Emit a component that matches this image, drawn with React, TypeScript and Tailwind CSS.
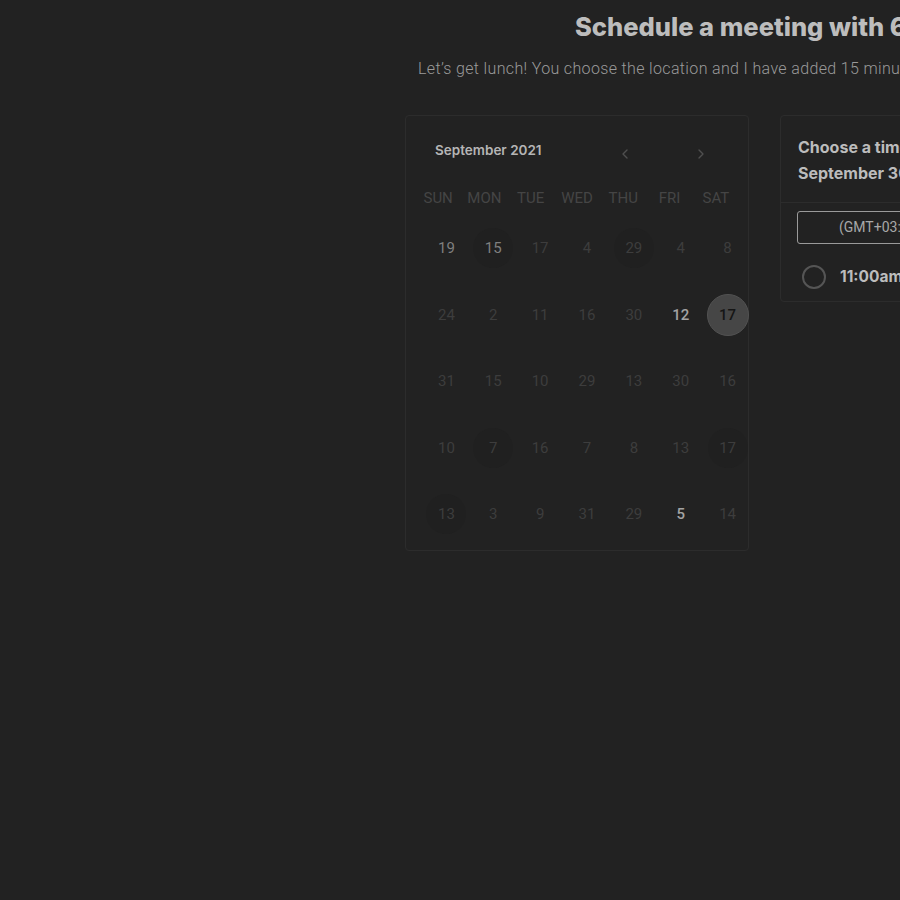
import { ChevronLeft, ChevronRight } from 'lucide-react'

type Day = { n: number; tone: 'dim' | 'mid' | 'bright' | 'selected'; ring?: boolean }

const weekdays = ['SUN', 'MON', 'TUE', 'WED', 'THU', 'FRI', 'SAT']

const rows: Day[][] = [
    [
        { n: 19, tone: 'mid' },
        { n: 15, tone: 'mid', ring: true },
        { n: 17, tone: 'dim' },
        { n: 4, tone: 'dim' },
        { n: 29, tone: 'dim', ring: true },
        { n: 4, tone: 'dim' },
        { n: 8, tone: 'dim' },
    ],
    [
        { n: 24, tone: 'dim' },
        { n: 2, tone: 'dim' },
        { n: 11, tone: 'dim' },
        { n: 16, tone: 'dim' },
        { n: 30, tone: 'dim' },
        { n: 12, tone: 'bright' },
        { n: 17, tone: 'selected' },
    ],
    [
        { n: 31, tone: 'dim' },
        { n: 15, tone: 'dim' },
        { n: 10, tone: 'dim' },
        { n: 29, tone: 'dim' },
        { n: 13, tone: 'dim' },
        { n: 30, tone: 'dim' },
        { n: 16, tone: 'dim' },
    ],
    [
        { n: 10, tone: 'dim' },
        { n: 7, tone: 'dim', ring: true },
        { n: 16, tone: 'dim' },
        { n: 7, tone: 'dim' },
        { n: 8, tone: 'dim' },
        { n: 13, tone: 'dim' },
        { n: 17, tone: 'dim', ring: true },
    ],
    [
        { n: 13, tone: 'dim', ring: true },
        { n: 3, tone: 'dim' },
        { n: 9, tone: 'dim' },
        { n: 31, tone: 'dim' },
        { n: 29, tone: 'dim' },
        { n: 5, tone: 'bright' },
        { n: 14, tone: 'dim' },
    ],
]

function DayCell({ day }: { day: Day }) {
    if (day.tone === 'selected') {
        return (
            <div className="flex items-center justify-center">
                <span className="flex h-[42px] w-[42px] items-center justify-center rounded-full border border-[#525252] bg-[#464646] font-medium text-[#151515]">
                    {day.n}
                </span>
            </div>
        )
    }
    const color =
        day.tone === 'bright' ? 'text-[#a3a3a3] font-medium' : day.tone === 'mid' ? 'text-[#7f7f7f]' : 'text-[#3d3d3d]'
    return (
        <div className="flex items-center justify-center">
            <span
                className={`flex h-[40px] w-[40px] items-center justify-center rounded-full ${day.ring ? 'bg-[#202020]' : ''} ${color}`}
            >
                {day.n}
            </span>
        </div>
    )
}

export default function App() {
    return (
        <div className="min-h-screen w-full overflow-hidden bg-[#222222] font-['Roboto',sans-serif]">
            <div className="w-[1400px] pl-[405px]">
                <h1 className="whitespace-nowrap pl-[170px] pt-[10px] font-['Inter',sans-serif] text-[25.5px] font-extrabold leading-[34px] text-[#bdbdbd]">
                    Schedule a meeting with 6ixty Studio
                </h1>
                <p className="mt-[15px] whitespace-nowrap pl-[13px] text-[16px] font-light leading-[20px] tracking-[0.35px] text-[#9a9a9a]">
                    Let’s get lunch! You choose the location and I have added 15 minutes of travel time on either side.
                </p>

                <div className="mt-[36px] flex items-start gap-[31px]">
                    <div className="h-[436px] w-[344px] rounded border border-[#2c2c2c]">
                        <div className="mt-[24px] flex h-[20px] items-center pl-[29px]">
                            <span className="w-[180px] font-['Inter',sans-serif] text-[13.5px] font-semibold text-[#b5b5b5]">
                                September 2021
                            </span>
                            <div className="mt-[8px] flex items-center gap-[60px] pl-[2px]">
                                <ChevronLeft size={16} strokeWidth={2} className="text-[#4f4f4f]" />
                                <ChevronRight size={16} strokeWidth={2} className="text-[#4f4f4f]" />
                            </div>
                        </div>

                        <div className="mt-[28px] ml-[9px] grid w-[324px] grid-cols-7 text-center text-[15px] leading-[20px] text-[#454545]">
                            {weekdays.map((d) => (
                                <span key={d}>{d}</span>
                            ))}
                        </div>

                        <div className="mt-[7px] ml-[17px] grid w-[328px] grid-cols-7 auto-rows-[66.5px] text-[15px]">
                            {rows.map((row, ri) => row.map((day, di) => <DayCell key={`${ri}-${di}`} day={day} />))}
                        </div>
                    </div>

                    <div className="w-[420px] rounded border border-[#2c2c2c]">
                        <div className="px-[17px] pt-[18px] pb-[16px] font-['Inter',sans-serif] text-[16px] font-bold leading-[26px] text-[#bcbcbc]">
                            <p>Choose a time on</p>
                            <p>September 30, 2021</p>
                        </div>
                        <div className="border-t border-[#2c2c2c] px-[16px] pt-[8px] pb-[12px]">
                            <div className="flex h-[33px] items-center rounded-[3px] border border-[#9a9a9a] pl-[41px] text-[14px] text-[#a8a8a8]">
                                (GMT+03:00) Nairobi
                            </div>
                            <div className="mt-[21px] flex items-center gap-[14px] pl-[5px]">
                                <span className="h-[24px] w-[24px] rounded-full border-2 border-[#555]" />
                                <span className="font-['Inter',sans-serif] text-[15.5px] font-bold text-[#bcbcbc]">11:00am</span>
                            </div>
                        </div>
                    </div>
                </div>
            </div>
        </div>
    )
}
